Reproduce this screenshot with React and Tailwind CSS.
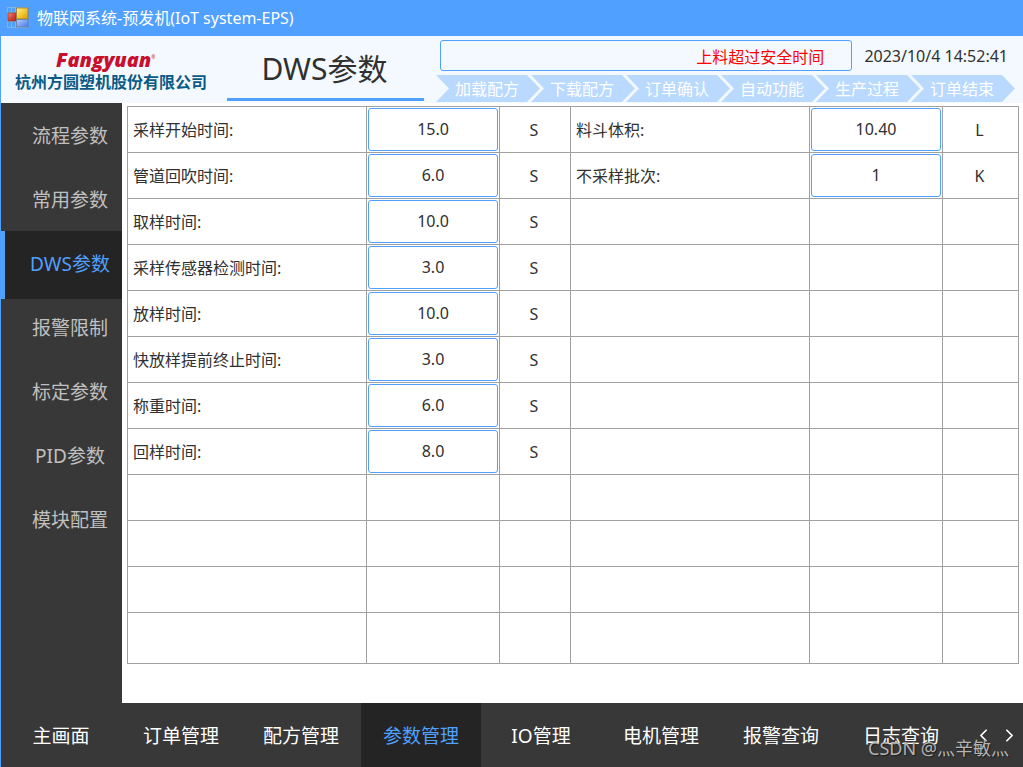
import React, { useState } from 'react';
import { ChevronLeft, ChevronRight } from 'lucide-react';

const sideItems = ['流程参数', '常用参数', 'DWS参数', '报警限制', '标定参数', 'PID参数', '模块配置'];

const bottomItems = [
  '主画面',
  '订单管理',
  '配方管理',
  '参数管理',
  'IO管理',
  '电机管理',
  '报警查询',
  '日志查询',
];

const steps = ['加载配方', '下载配方', '订单确认', '自动功能', '生产过程', '订单结束'];

const leftParams = [
  { id: 'sampleStart', label: '采样开始时间:', value: '15.0', unit: 'S' },
  { id: 'pipeBlow', label: '管道回吹时间:', value: '6.0', unit: 'S' },
  { id: 'takeSample', label: '取样时间:', value: '10.0', unit: 'S' },
  { id: 'sensorCheck', label: '采样传感器检测时间:', value: '3.0', unit: 'S' },
  { id: 'release', label: '放样时间:', value: '10.0', unit: 'S' },
  { id: 'fastReleaseStop', label: '快放样提前终止时间:', value: '3.0', unit: 'S' },
  { id: 'weigh', label: '称重时间:', value: '6.0', unit: 'S' },
  { id: 'returnSample', label: '回样时间:', value: '8.0', unit: 'S' },
];

const rightParams = [
  { id: 'hopperVolume', label: '料斗体积:', value: '10.40', unit: 'L' },
  { id: 'skipBatches', label: '不采样批次:', value: '1', unit: 'K' },
];

const ROW_COUNT = 12;

function AppIcon() {
  return (
    <svg width="22" height="22" viewBox="0 0 22 22" aria-hidden="true">
      <defs>
        <linearGradient id="red" x1="0" y1="0" x2="1" y2="1">
          <stop offset="0" stopColor="#f0968a" />
          <stop offset="0.5" stopColor="#d8453a" />
          <stop offset="1" stopColor="#b02418" />
        </linearGradient>
        <linearGradient id="yellow" x1="0" y1="0" x2="1" y2="1">
          <stop offset="0" stopColor="#fff0a0" />
          <stop offset="0.5" stopColor="#f5c832" />
          <stop offset="1" stopColor="#d89a08" />
        </linearGradient>
        <linearGradient id="blue" x1="0" y1="0" x2="1" y2="1">
          <stop offset="0" stopColor="#b4ceff" />
          <stop offset="1" stopColor="#4478e8" />
        </linearGradient>
      </defs>
      <path
        d="M0.5 0.5H20.5V20.5H0.5ZM0.5 5.5H9M0.5 14.5H9M4.5 0.5V20.5M8.5 0.5V20.5"
        fill="none"
        stroke="#86b4e6"
      />
      <rect x="1" y="6" width="8" height="8" fill="url(#red)" stroke="#8c3a38" strokeWidth="0.8" />
      <rect x="9.5" y="1" width="11.5" height="11" fill="url(#yellow)" stroke="#9a7a28" strokeWidth="0.8" />
      <rect x="9.5" y="12.5" width="11.5" height="7.5" fill="url(#blue)" stroke="#6c7c98" strokeWidth="0.8" />
    </svg>
  );
}

function ParamCells({ param, value, onChange }) {
  if (!param) {
    return (
      <>
        <td className="border border-[#a0a0a0]" />
        <td className="border border-[#a0a0a0]" />
        <td className="border border-[#a0a0a0]" />
      </>
    );
  }

  return (
    <>
      <td className="border border-[#a0a0a0] pl-[5px]">
        <label htmlFor={param.id}>{param.label}</label>
      </td>
      <td className="border border-[#a0a0a0] p-px">
        <input
          type="text"
          id={param.id}
          name={param.id}
          value={value}
          onChange={onChange}
          className="block h-[43px] w-full rounded-[3px] border border-[#50a0ff] bg-white pb-[2px] text-center focus:outline-none"
        />
      </td>
      <td className="border border-[#a0a0a0] pr-[2px] text-center">{param.unit}</td>
    </>
  );
}

function App() {
  const [activeSide, setActiveSide] = useState('DWS参数');
  const [activeBottom, setActiveBottom] = useState('参数管理');
  const [values, setValues] = useState(
    Object.fromEntries([...leftParams, ...rightParams].map((p) => [p.id, p.value]))
  );

  const handleChange = (e) => {
    const { name, value } = e.target;
    setValues((prev) => ({
      ...prev,
      [name]: value,
    }));
  };

  return (
    <div className="relative flex min-h-screen flex-col bg-white font-['Noto_Sans','Noto_Sans_CJK_SC',sans-serif] text-base text-[#303030]">
      <div className="flex h-9 items-center gap-2 bg-[#50a0ff] pl-[7px] text-white">
        <AppIcon />
        <span>物联网系统-预发机(IoT system-EPS)</span>
      </div>

      <div className="flex grow flex-col border-l border-[#50a0ff]">
        <header className="flex h-[67px] bg-[#f3f9ff]">
          <div className="flex w-[226px] shrink-0 flex-col pt-3 pl-[14px] whitespace-nowrap">
            <span className="pl-[41px] font-['Open_Sans'] text-xl leading-6 font-extrabold text-[#c8102e] italic">
              Fangyuan<span className="align-super text-[5px] leading-none font-normal">®</span>
            </span>
            <span className="text-base leading-5 font-bold text-[#0b5a85]">杭州方圆塑机股份有限公司</span>
          </div>

          <h1 className="mb-[2px] flex w-[197px] shrink-0 items-center justify-center border-b-[3px] border-[#50a0ff] pt-[2px] pr-[2px] text-[30px]">
            DWS参数
          </h1>

          <div className="flex min-w-0 grow flex-col gap-1 pt-1 pr-2 pl-3">
            <div className="flex items-center gap-3 pl-1">
              <input
                type="text"
                aria-label="报警信息"
                readOnly
                value="上料超过安全时间"
                className="h-[31px] min-w-0 grow rounded-[3px] border border-[#50a0ff] bg-[#f3f9ff] pr-[27px] text-right text-[#ff0000] focus:outline-none"
              />
              <time className="pr-[7px] whitespace-nowrap">2023/10/4 14:52:41</time>
            </div>
            <ol className="flex pl-[9px] text-white">
              {steps.map((step) => (
                <li
                  key={step}
                  className="-ml-[9px] flex h-[27px] flex-1 items-center justify-center bg-[#b9d9ff] pr-[2px] whitespace-nowrap [clip-path:polygon(0_0,calc(100%-13px)_0,100%_50%,calc(100%-13px)_100%,0_100%,13px_50%)]"
                >
                  {step}
                </li>
              ))}
            </ol>
          </div>
        </header>

        <div className="flex grow">
          <nav className="flex w-[121px] shrink-0 flex-col bg-[#383838] text-[19px]">
            {sideItems.map((item) =>
              item === activeSide ? (
                <button
                  key={item}
                  type="button"
                  aria-current="page"
                  className="-mb-1 h-[68px] border-l-4 border-[#50a0ff] bg-[#242424] pt-[2px] pb-1 pl-[13px] text-[#50a0ff]"
                >
                  {item}
                </button>
              ) : (
                <button
                  key={item}
                  type="button"
                  onClick={() => setActiveSide(item)}
                  className="h-16 pt-[2px] pl-[17px] text-[#c0c0c0]"
                >
                  {item}
                </button>
              )
            )}
          </nav>

          <main className="grow pt-[3px] pr-1 pb-[39px] pl-[5px]">
            <table className="w-full table-fixed border-collapse">
              <colgroup>
                <col />
                <col className="w-[133px]" />
                <col className="w-[71px]" />
                <col />
                <col className="w-[133px]" />
                <col className="w-[76px]" />
              </colgroup>
              <tbody>
                {Array.from({ length: ROW_COUNT }, (_, i) => (
                  <tr key={i} className="h-[46px] last:h-[51px]">
                    <ParamCells
                      param={leftParams[i]}
                      value={leftParams[i] && values[leftParams[i].id]}
                      onChange={handleChange}
                    />
                    <ParamCells
                      param={rightParams[i]}
                      value={rightParams[i] && values[rightParams[i].id]}
                      onChange={handleChange}
                    />
                  </tr>
                ))}
              </tbody>
            </table>
          </main>
        </div>

        <nav className="flex h-16 bg-[#383838] text-[19px] text-white">
          {bottomItems.map((item) => (
            <button
              key={item}
              type="button"
              onClick={() => setActiveBottom(item)}
              className={
                item === activeBottom
                  ? 'w-[120px] shrink-0 bg-[#242424] pt-[2px] text-[#50a0ff]'
                  : 'w-[120px] shrink-0 pt-[2px]'
              }
            >
              {item}
            </button>
          ))}
          <div className="ml-auto flex items-center gap-[5px] pr-[3px]">
            <button type="button" aria-label="上一页">
              <ChevronLeft size={21} strokeWidth={2} />
            </button>
            <button type="button" aria-label="下一页">
              <ChevronRight size={21} strokeWidth={2} />
            </button>
          </div>
        </nav>
      </div>

      <div className="pointer-events-none absolute right-[14px] bottom-[7px] text-[18px] leading-6 text-[#b4b4b4] text-shadow-[1px_1px_1px_#00000080]">
        CSDN @灬辛敏灬
      </div>
    </div>
  );
}

export default App;
